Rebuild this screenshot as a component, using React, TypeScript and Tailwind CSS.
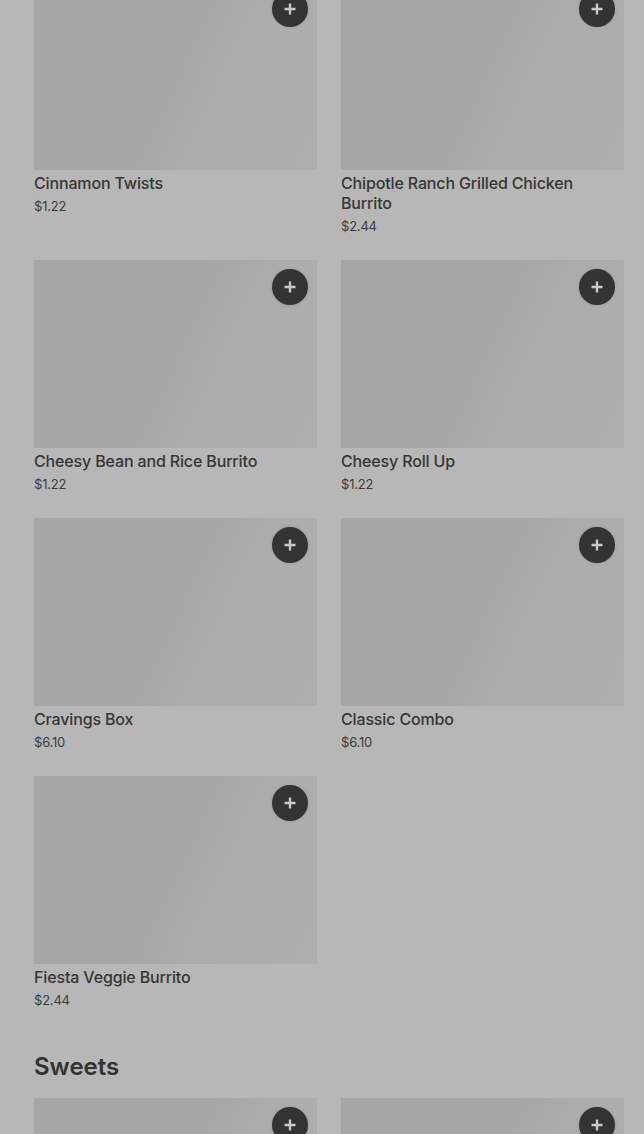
import React from "react";

type Item = { name: string; price: string };

const rows: Item[][] = [
  [
    { name: "Cinnamon Twists", price: "$1.22" },
    { name: "Chipotle Ranch Grilled Chicken Burrito", price: "$2.44" },
  ],
  [
    { name: "Cheesy Bean and Rice Burrito", price: "$1.22" },
    { name: "Cheesy Roll Up", price: "$1.22" },
  ],
  [
    { name: "Cravings Box", price: "$6.10" },
    { name: "Classic Combo", price: "$6.10" },
  ],
  [{ name: "Fiesta Veggie Burrito", price: "$2.44" }],
];

function PlusButton() {
  return (
    <button className="absolute top-[9px] right-[9px] w-[36px] h-[36px] rounded-full bg-[#333333] flex items-center justify-center shadow-[0_0_3px_rgba(0,0,0,0.15)]">
      <svg width="14" height="14" viewBox="0 0 14 14" fill="none">
        <path d="M7 1.5v11M1.5 7h11" stroke="#c9c9c9" strokeWidth="2.4" />
      </svg>
    </button>
  );
}

function ImageBox() {
  return (
    <div className="relative h-[188px] bg-[linear-gradient(115deg,#a6a6a6_0%,#a6a6a6_45%,#adadad_70%,#aeaeae_100%)]">
      <PlusButton />
    </div>
  );
}

function Card({ item }: { item: Item }) {
  return (
    <div className="flex flex-col">
      <ImageBox />
      <div className="pt-[3px] text-[16px] leading-[20px] font-medium tracking-[-0.15px] text-[#363636]">
        {item.name}
      </div>
      <div className="mt-[3px] text-[13px] leading-[20px] tracking-[-0.2px] text-[#3c3c3c]">
        {item.price}
      </div>
    </div>
  );
}

export default function App() {
  return (
    <div
      className="h-[1134px] w-[644px] overflow-hidden bg-[#b7b7b7]"
      style={{ fontFamily: "Inter, 'Noto Sans', sans-serif" }}
    >
      <div className="mt-[-18px] pl-[34px] pr-[20px] flex flex-col">
        <div className="grid grid-cols-2 gap-x-[24px] gap-y-[24px]">
          {rows.flat().map((it, i) => (
            <Card key={i} item={it} />
          ))}
        </div>
        <h2 className="mt-[41px] text-[24px] leading-[32px] font-semibold text-[#333333]">
          Sweets
        </h2>
        <div className="mt-[15px] grid grid-cols-2 gap-x-[24px] gap-y-[24px]">
          <ImageBox />
          <ImageBox />
        </div>
      </div>
    </div>
  );
}
